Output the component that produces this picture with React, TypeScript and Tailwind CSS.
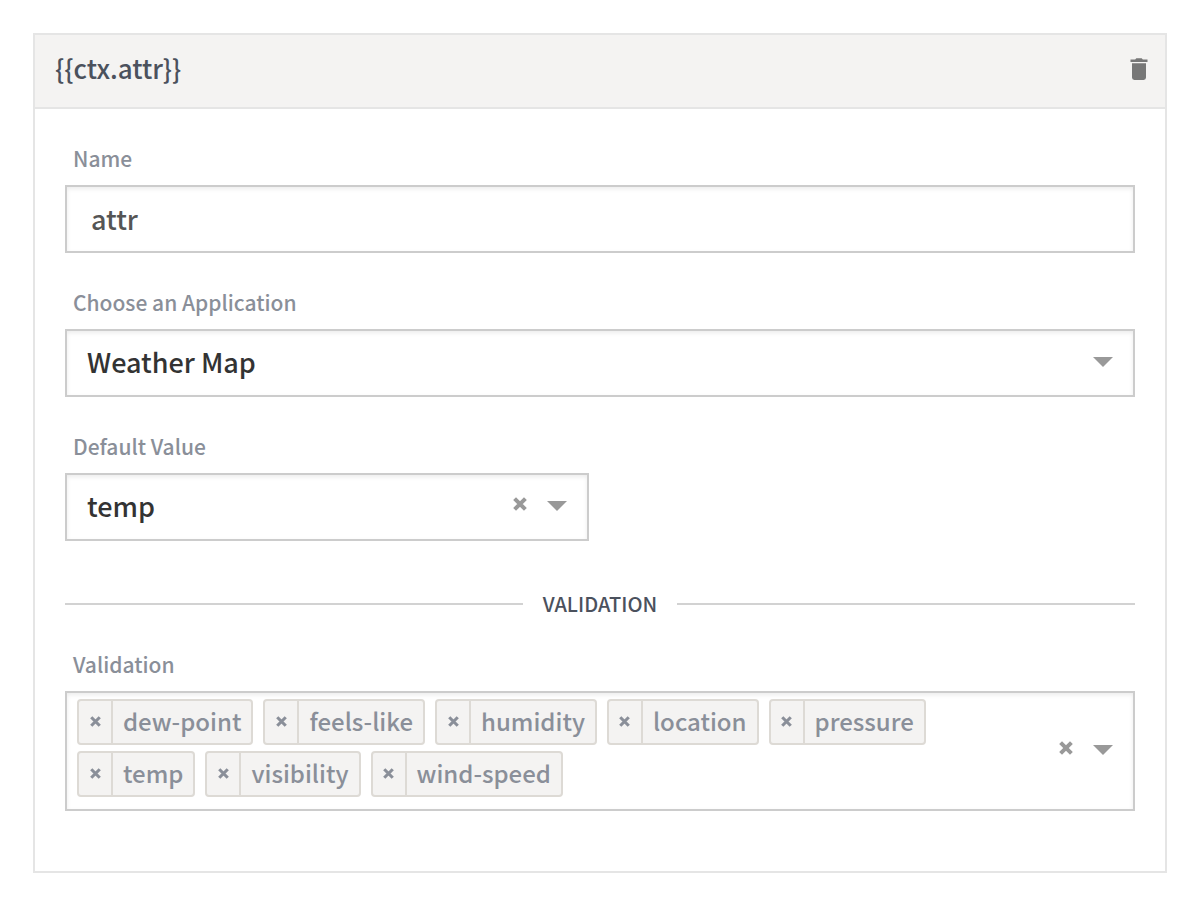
import { useState } from "react";

const OPTIONS = [
  "dew-point",
  "feels-like",
  "humidity",
  "location",
  "pressure",
  "temp",
  "visibility",
  "wind-speed",
];

const LABEL = "block h-9 px-2 text-[21px] leading-[34px] font-medium text-[#8a8f99]";
const BOX =
  "border-2 border-[#cccccc] bg-white shadow-[inset_0_2px_4px_rgba(0,0,0,0.08)]";

function Arrow() {
  return (
    <svg width="20" height="10" viewBox="0 0 20 10" aria-hidden="true">
      <path d="M0 0H20L10 10Z" fill="#999999" />
    </svg>
  );
}

function Cross({ size, width }: { size: number; width: number }) {
  return (
    <svg width={size} height={size} viewBox="0 0 14 14" aria-hidden="true">
      <path d="M1.6 1.6L12.4 12.4M12.4 1.6L1.6 12.4" stroke="currentColor" strokeWidth={width} fill="none" />
    </svg>
  );
}

export default function App() {
  const [name, setName] = useState("attr");
  const [app, setApp] = useState("Weather Map");
  const [value, setValue] = useState("temp");
  const [tags, setTags] = useState(OPTIONS);

  return (
    <main className="min-h-screen bg-white p-[33px] font-['Noto_Sans_CJK_SC',sans-serif]">
      <section className="border-2 border-[#e5e5e5]">
        <header className="flex h-[74px] items-center justify-between border-b-2 border-[#e5e5e5] bg-[#f4f3f2] pr-4 pb-1 pl-5">
          <h1 className="pb-[2px] text-[26px] leading-9 font-medium text-[#4b515d]">{"{{ctx.attr}}"}</h1>
          <button type="button" aria-label="Delete attribute" className="flex w-5 justify-center">
            <svg width="18" height="22" viewBox="0 0 18 22" aria-hidden="true">
              <path
                d="M0.5 1.6H5.2L6.3 0.2H11.7L12.8 1.6H17.5V4H0.5ZM2 5.2H16V19.6Q16 22 13.6 22H4.4Q2 22 2 19.6Z"
                fill="#777777"
              />
            </svg>
          </button>
        </header>

        <form className="px-[30px] pt-8 pb-[60px]" onSubmit={(e) => e.preventDefault()}>
          <div className="flex flex-col gap-8">
            <div className="flex flex-col gap-2">
              <label htmlFor="name" className={LABEL}>Name</label>
              <input
                id="name"
                value={name}
                onChange={(e) => setName(e.target.value)}
                className={`${BOX} h-[68px] w-full px-6 pb-[2px] text-[27px] font-medium text-[#555555]`}
              />
            </div>

            <div className="flex flex-col gap-2">
              <label htmlFor="app" className={LABEL}>Choose an Application</label>
              <div className="grid items-center">
                <select
                  id="app"
                  value={app}
                  onChange={(e) => setApp(e.target.value)}
                  className={`${BOX} col-start-1 row-start-1 h-[68px] w-full appearance-none pr-16 pb-[2px] pl-5 text-[27px] font-medium text-[#333333]`}
                >
                  <option>Weather Map</option>
                </select>
                <span className="pointer-events-none col-start-1 row-start-1 mr-[22px] mb-[2px] justify-self-end">
                  <Arrow />
                </span>
              </div>
            </div>

            <div className="grid grid-cols-2 gap-[22px]">
              <div className="flex flex-col gap-2">
                <label htmlFor="value" className={LABEL}>Default Value</label>
                <div className="grid items-center">
                  <select
                    id="value"
                    value={value}
                    onChange={(e) => setValue(e.target.value)}
                    className={`${BOX} col-start-1 row-start-1 h-[68px] w-full appearance-none pr-24 pb-[2px] pl-5 text-[27px] font-medium text-[#333333]`}
                  >
                    <option value=""></option>
                    {OPTIONS.map((o) => (
                      <option key={o}>{o}</option>
                    ))}
                  </select>
                  <span className="pointer-events-none col-start-1 row-start-1 mr-[22px] mb-[2px] flex items-center gap-5 justify-self-end">
                    <button
                      type="button"
                      aria-label="Clear default value"
                      onClick={() => setValue("")}
                      className="pointer-events-auto mb-1 text-[#999999]"
                    >
                      <Cross size={14} width={4} />
                    </button>
                    <Arrow />
                  </span>
                </div>
              </div>
            </div>
          </div>

          <div className="mt-12 flex items-center gap-5">
            <span className="h-[2px] flex-1 bg-[#d2d2d2]" />
            <h2 className="text-[20px] leading-[30px] font-medium text-[#4b515d]">VALIDATION</h2>
            <span className="h-[2px] flex-1 bg-[#d2d2d2]" />
          </div>

          <div role="group" aria-labelledby="validation" className="mt-7 flex flex-col gap-2">
            <span id="validation" className={LABEL}>Validation</span>
            <div className={`${BOX} flex items-center justify-between pr-5`}>
              <ul className="flex max-w-[900px] flex-wrap gap-x-[10px] gap-y-[6px] pt-[6px] pb-3 pl-[10px]">
                {tags.map((tag) => (
                  <li
                    key={tag}
                    className="flex h-[46px] rounded border-2 border-[#dddad5] bg-[#f4f3f2] text-[#8a8f99]"
                  >
                    <button
                      type="button"
                      aria-label={`Remove ${tag}`}
                      onClick={() => setTags(tags.filter((t) => t !== tag))}
                      className="flex w-[34px] items-center justify-center border-r-2 border-[#dddad5] pb-[2px]"
                    >
                      <Cross size={11} width={4} />
                    </button>
                    <span className="px-[10px] text-[24px] leading-10 font-medium">{tag}</span>
                  </li>
                ))}
              </ul>
              <span className="flex items-center gap-5 pb-[2px]">
                <button
                  type="button"
                  aria-label="Clear validation"
                  onClick={() => setTags([])}
                  className="mb-1 text-[#999999]"
                >
                  <Cross size={14} width={4} />
                </button>
                <button type="button" aria-label="Open validation options">
                  <Arrow />
                </button>
              </span>
            </div>
          </div>
        </form>
      </section>
    </main>
  );
}
